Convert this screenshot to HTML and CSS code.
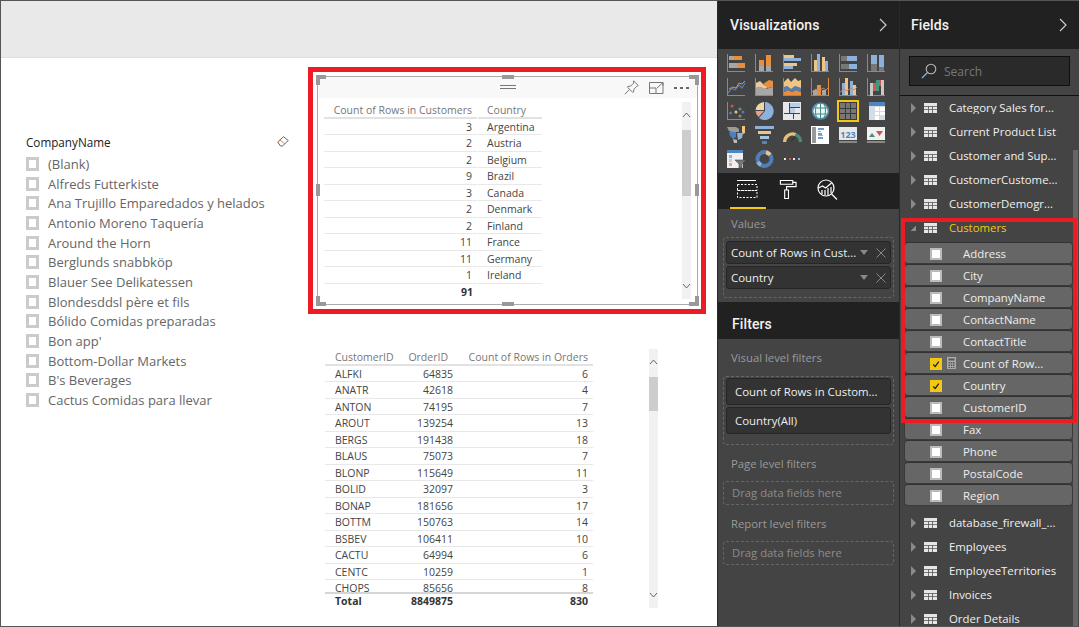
FILE: index.html
```html
<!DOCTYPE html>
<html lang="en">
<head>
<meta charset="utf-8">
<title>Power BI Desktop</title>
<link rel="stylesheet" href="styles.css">
</head>
<body>
<svg class="defs" width="0" height="0">
  <symbol id="tbl" viewBox="0 0 13 10"><path fill="#e6e6e6" d="M0 0h13v10H0z"/><path fill="#555" d="M0 3h13v.8H0zM0 6h13v.8H0zM4 3h.8v7H4zM8.2 3h.8v7h-.8z"/></symbol>
</svg>
<div class="app">
  <main class="canvas">
    <div class="ribbon"></div>
    <div class="page">

      <section class="slicer">
        <div class="slicer-head"><span>CompanyName</span>
          <svg class="eraser" width="12" height="11" viewBox="0 0 12 11"><path fill="#fff" stroke="#666" d="M.7 6 6.500.7l4.800 3.800L5.500 10H3.500z"/><path fill="none" stroke="#d98a5a" d="M3 4l5 4"/></svg>
        </div>
        <ul class="slicer-list">
          <li><i></i>(Blank)</li>
          <li><i></i>Alfreds Futterkiste</li>
          <li><i></i>Ana Trujillo Emparedados y helados</li>
          <li><i></i>Antonio Moreno Taquería</li>
          <li><i></i>Around the Horn</li>
          <li><i></i>Berglunds snabbköp</li>
          <li><i></i>Blauer See Delikatessen</li>
          <li><i></i>Blondesddsl père et fils</li>
          <li><i></i>Bólido Comidas preparadas</li>
          <li><i></i>Bon app'</li>
          <li><i></i>Bottom-Dollar Markets</li>
          <li><i></i>B's Beverages</li>
          <li><i></i>Cactus Comidas para llevar</li>
        </ul>
      </section>

      <div class="highlight-visual"></div>
      <section class="visual-one">
        <div class="visual-bar">
          <span class="drag"></span>
          <div class="visual-tools">
            <svg width="15" height="15" viewBox="0 0 15 15"><path fill="none" stroke="#777" d="M9.500 .8l4.700 4.700-1.300.7-3 3-.3 2.800-.9.300L3.500 7.300l.4-.9 2.700-.3 3-3zM5.500 9.500 .8 14.200"/></svg>
            <svg width="15" height="13" viewBox="0 0 15 13"><path fill="none" stroke="#777" d="M.5 1.500h13.500v11H.5zM.5 7h6.500v5.500M8 7l6-5.500M10.500 1.500h3.500v3"/></svg>
            <span class="dots"><b></b><b></b><b></b></span>
          </div>
        </div>
        <div class="grid-one">
          <div class="hd r gap"><span>Count of Rows in Customers</span></div><div class="hd"><span>Country</span></div>
          <div class="r gap">3</div><div>Argentina</div>
          <div class="r gap">2</div><div>Austria</div>
          <div class="r gap">2</div><div>Belgium</div>
          <div class="r gap">9</div><div>Brazil</div>
          <div class="r gap">3</div><div>Canada</div>
          <div class="r gap">2</div><div>Denmark</div>
          <div class="r gap">2</div><div>Finland</div>
          <div class="r gap">11</div><div>France</div>
          <div class="r gap">11</div><div>Germany</div>
          <div class="r gap">1</div><div>Ireland</div>
          <div class="r tot">91</div><div class="tot"></div>
        </div>
        <div class="scroll scroll-one">
          <svg width="9" height="6" viewBox="0 0 9 6"><path fill="none" stroke="#666" d="M1 5l3.500-4L8 5"/></svg>
          <span class="thumb thumb-one"></span>
          <svg class="down" width="9" height="6" viewBox="0 0 9 6"><path fill="none" stroke="#666" d="M1 1l3.500 4L8 1"/></svg>
        </div>
        <span class="h corner tl"></span><span class="h corner tr"></span><span class="h corner bl"></span><span class="h corner br"></span>
        <span class="h top"></span><span class="h bottom"></span><span class="h left"></span><span class="h right"></span>
      </section>

      <section class="visual-two">
        <div class="grid-two head-two">
          <div class="hd">CustomerID</div><div class="hd r">OrderID</div><div class="hd r">Count of Rows in Orders</div>
        </div>
        <div class="body-two">
          <div class="grid-two">
            <div>ALFKI</div><div class="r">64835</div><div class="r">6</div>
            <div>ANATR</div><div class="r">42618</div><div class="r">4</div>
            <div>ANTON</div><div class="r">74195</div><div class="r">7</div>
            <div>AROUT</div><div class="r">139254</div><div class="r">13</div>
            <div>BERGS</div><div class="r">191438</div><div class="r">18</div>
            <div>BLAUS</div><div class="r">75073</div><div class="r">7</div>
            <div>BLONP</div><div class="r">115649</div><div class="r">11</div>
            <div>BOLID</div><div class="r">32097</div><div class="r">3</div>
            <div>BONAP</div><div class="r">181656</div><div class="r">17</div>
            <div>BOTTM</div><div class="r">150763</div><div class="r">14</div>
            <div>BSBEV</div><div class="r">106411</div><div class="r">10</div>
            <div>CACTU</div><div class="r">64994</div><div class="r">6</div>
            <div>CENTC</div><div class="r">10259</div><div class="r">1</div>
            <div>CHOPS</div><div class="r">85656</div><div class="r">8</div>
          </div>
        </div>
        <div class="grid-two total-two">
          <div>Total</div><div class="r">8849875</div><div class="r">830</div>
        </div>
        <div class="scroll scroll-two">
          <svg width="9" height="6" viewBox="0 0 9 6"><path fill="none" stroke="#666" d="M1 5l3.500-4L8 5"/></svg>
          <span class="thumb thumb-two"></span>
          <svg class="down" width="9" height="6" viewBox="0 0 9 6"><path fill="none" stroke="#666" d="M1 1l3.500 4L8 1"/></svg>
        </div>
      </section>
    </div>
  </main>

  <aside class="panel viz">
    <header class="panel-head"><h2>Visualizations</h2>
      <svg width="8" height="14" viewBox="0 0 8 14"><path fill="none" stroke="#ccc" stroke-width="1.200" d="M1 1l6 6-6 6"/></svg>
    </header>
    <div class="gallery">
      <svg width="19" height="18" viewBox="0 0 19 18"><path stroke="#8a8a8a" fill="none" d="M.5 0v18M0 17.500h18"/><path fill="#a7a7a7" d="M2 2h5v4H2zM2 9h8v5H2z"/><path fill="#e98e3b" d="M7 2h8v4H7zM10 9h8v5h-8z"/></svg>
      <svg width="19" height="18" viewBox="0 0 19 18"><path stroke="#8a8a8a" fill="none" d="M.5 0v18M0 17.500h18"/><path fill="#e98e3b" d="M4 6h5v6H4zM11 1h5v11h-5z"/><path fill="#a7a7a7" d="M4 12h5v5H4zM11 12h5v5h-5z"/></svg>
      <svg width="19" height="18" viewBox="0 0 19 18"><path stroke="#8a8a8a" fill="none" d="M.5 0v18M0 17.500h18"/><path fill="#eec584" d="M1 1h10v3H1zM1 9h13v3H1z"/><path fill="#8eb1dc" d="M1 4h17v3H1zM1 12h9v3H1z"/></svg>
      <svg width="19" height="18" viewBox="0 0 19 18"><path stroke="#8a8a8a" fill="none" d="M.5 0v18M0 17.500h18"/><path fill="#eec584" d="M3 6h3v11H3zM11 3h3v14h-3z"/><path fill="#8eb1dc" d="M6 0h3v17H6zM14 7h3v10h-3z"/></svg>
      <svg width="19" height="18" viewBox="0 0 19 18"><path stroke="#8a8a8a" fill="none" d="M.5 0v18M0 17.500h18"/><path fill="#777" d="M2 2h6v5H2zM2 10h8v5H2z"/><path fill="#8eb1dc" d="M8 2h10v5H8zM10 10h8v5h-8z"/></svg>
      <svg width="19" height="18" viewBox="0 0 19 18"><path stroke="#8a8a8a" fill="none" d="M.5 0v18M0 17.500h18"/><path fill="#8eb1dc" d="M4 1h6v9H4zM12 1h5v12h-5z"/><path fill="#777" d="M4 10h6v7H4zM12 13h5v4h-5z"/></svg>

      <svg width="19" height="18" viewBox="0 0 19 18"><path stroke="#8a8a8a" fill="none" d="M.5 0v18M0 17.500h18"/><path fill="none" stroke="#4f7eb8" stroke-width="1.300" d="M1 15l4-5 3 2 4-5 3 3 3-5"/><path fill="none" stroke="#e98e3b" d="M2 11l4-2 3 1 3-5 3 1 3-3"/></svg>
      <svg width="19" height="18" viewBox="0 0 19 18"><path stroke="#8a8a8a" fill="none" d="M0 17.500h18M.5 0v18"/><path fill="#a7a7a7" d="M1 17v-7l4-1 5 2 8-2v8z"/><path fill="#eac9a0" d="M1 10V5l4-2 4 4 4 2-3 2-5-2z"/><path fill="#e98e3b" d="M8 6l6-4 4 1v6l-5 1z"/></svg>
      <svg width="19" height="18" viewBox="0 0 19 18" overflow="visible"><path stroke="#8a8a8a" fill="none" d="M.5 0v18M0 17.500h18"/><path fill="#e98e3b" d="M1 14l4-2 4 2 4-2 5 2v3H1z"/><path fill="#4f7eb8" d="M1 9l3-1 4 3 4-3 6 2v4l-5-2-4 2-4-2-4 2z"/><path fill="#eec584" d="M1 4l4-4 3 4 4-4 3 3 3-1v8l-6-2-4 3-4-3-3 1z"/></svg>
      <svg width="19" height="18" viewBox="0 0 19 18"><path stroke="#8a8a8a" fill="none" d="M.5 0v18M0 17.500h18"/><path fill="#a7a7a7" d="M2 12h4v5H2zM11 12h4v5h-4z"/><path fill="#e98e3b" d="M6 7h4v10H6z"/><path stroke="#e98e3b" fill="none" d="M17.500 0v18"/><path fill="none" stroke="#d9824a" d="M1 14l4-3 3 2 4-3 3 2 3-3"/></svg>
      <svg width="19" height="18" viewBox="0 0 19 18"><path stroke="#8a8a8a" fill="none" d="M.5 0v18M0 17.500h18"/><path fill="#8eb1dc" d="M3 5h3v12H3zM11 3h3v14h-3z"/><path fill="#eec584" d="M6 0h3v17H6zM14 7h3v10h-3z"/><path fill="none" stroke="#d9824a" d="M1 14l4-3 3 2 4-3 3 2 3-3"/></svg>
      <svg width="19" height="18" viewBox="0 0 19 18"><path stroke="#8a8a8a" fill="none" d="M.5 0v18M0 17.500h18"/><path fill="#c8c8c8" d="M3 5h3v13H3z"/><path fill="#d2574c" d="M6 5h3v8H6z"/><path fill="#3f9a7c" d="M9 2h3v11H9z"/><path fill="#d2574c" d="M12 2h2v6h-2z"/><path fill="#c8c8c8" d="M14 2h3v15h-3z"/></svg>

      <svg width="19" height="18" viewBox="0 0 19 18"><path stroke="#8a8a8a" fill="none" d="M.5 0v18M0 17.500h18"/><circle cx="5" cy="4" r="1.500" fill="#c9594c"/><circle cx="3.500" cy="11" r="1.500" fill="#4f7eb8"/><circle cx="9" cy="10" r="1.500" fill="#eec584"/><circle cx="13" cy="7" r="1.500" fill="#5d9a88"/><circle cx="13" cy="14" r="1.500" fill="#8a8a8a"/><circle cx="16" cy="10" r="1.500" fill="#4f7eb8"/></svg>
      <svg width="19" height="18" viewBox="0 0 19 18"><path fill="#8eb1dc" d="M10 0a9 9 0 1 1-6 16l6-7z"/><path fill="#f1d6a8" d="M9 0v8H0.500A9 9 0 0 1 9 0z"/><path fill="#e5a08f" d="M.500 9H9l-5.500 6A9 9 0 0 1 .500 9z"/></svg>
      <svg width="19" height="18" viewBox="0 0 19 18"><path fill="#e8e8e8" d="M0 0h18v18H0z"/><path fill="#444" d="M6 1h1v10H6zM7 5h10v1H7zM1 11h16v1H1zM10 12h1v5h-1z"/><path fill="#b9cfe8" d="M7 1h10v4H7zM7 6h5v5H7z"/></svg>
      <svg width="19" height="18" viewBox="0 0 19 18"><circle cx="9.500" cy="9" r="8" fill="#f0f4f0" stroke="#4f86b8" stroke-width="1.600"/><path fill="none" stroke="#3f8f88" d="M2 6h15M2 12h15M9.500 1v16M6 1.500c-2 4-2 11 0 15M13 1.500c2 4 2 11 0 15"/></svg>
      <svg class="selected" width="22" height="22" viewBox="0 0 22 22"><rect x="1" y="1" width="20" height="20" fill="#3a3a3a" stroke="#f2c811" stroke-width="2"/><path fill="#777" d="M3 3h5v5H3zM9 3h4v5H9zM14 3h5v5h-5zM3 9h5v4H3zM9 9h4v4H9zM14 9h5v4h-5zM3 14h5v5H3zM9 14h4v5H9zM14 14h5v5h-5z"/></svg>
      <svg width="19" height="18" viewBox="0 0 19 18"><path fill="#d3dde8" d="M2 0h16v18H2z"/><path fill="#4f86c0" d="M2 0h16v4H2z"/><path fill="#fff" d="M8 5h4v4H8zM13 5h5v4h-5zM8 10h4v3H8zM13 10h5v3h-5z"/><path fill="#fff" d="M8 14h4v4H8z"/></svg>

      <svg width="19" height="18" viewBox="0 0 19 18"><path fill="#9a9a9a" d="M0 1h9l3 2v3H5L2 5z"/><path fill="#4f7eb8" d="M2 6h7v5l-3 2-3-3z"/><path fill="#8eb1dc" d="M10 7h6l-1 5-4 2z"/><path fill="#bcbcbc" d="M6 13l4 1v3H7z"/><path fill="#eec584" d="M15 0h3v7l-2 1-1-2z"/></svg>
      <svg width="19" height="18" viewBox="0 0 19 18"><path fill="#8eb1dc" d="M0 0h19v3H0z"/><path fill="#eec584" d="M3 5h13v3H3z"/><path fill="#a7c3e2" d="M5 10h9v3H5z"/><path fill="#4f86c0" d="M7 15h5v3H7z"/></svg>
      <svg width="19" height="18" viewBox="0 0 19 18"><path fill="none" stroke="#e5c07b" stroke-width="3.200" d="M1.600 16a8 8 0 0 1 11-7.500"/><path fill="none" stroke="#4d8a78" stroke-width="3.200" d="M12.600 8.500a8 8 0 0 1 4.800 7.500"/><path fill="none" stroke="#333" stroke-width="1.300" d="M8 15l4-4"/></svg>
      <svg width="19" height="18" viewBox="0 0 19 18"><path fill="#fff" d="M0 0h18v18H0z"/><path fill="#999" d="M1 1h4v16H1z"/><path fill="#6f9bd0" d="M7 2h6v2H7zM7 7h4v2H7zM7 11h5v2H7z"/><path fill="#aaa" d="M7 5h3v1H7zM7 9h5v1H7z"/></svg>
      <svg width="19" height="18" viewBox="0 0 19 18"><path fill="#e8e8e8" d="M0 1h18v13H0z"/><path fill="#888" d="M0 15h18v2H0z"/><text class="card-num" x="9" y="11.500" text-anchor="middle">123</text></svg>
      <svg width="19" height="18" viewBox="0 0 19 18"><path fill="#f1f1f1" d="M0 1h18v13H0z"/><path fill="#888" d="M0 15h18v2H0z"/><path fill="#4d8a78" d="M2 11l3-4 3 4z"/><path fill="#c9594c" d="M9 5h7l-3.500 5z"/></svg>

      <svg width="19" height="18" viewBox="0 0 19 18"><path fill="#eef0f4" d="M0 0h16v18H0z"/><path fill="#4f86c0" d="M0 0h16v3H0z"/><path fill="#8eb1dc" d="M2 5h3v3H2z"/><path fill="#eec584" d="M2 9h3v3H2z"/><path fill="#e5a08f" d="M2 13h3v3H2z"/><path fill="#777" stroke="#444" stroke-width=".6" d="M8 10h11l-4 4v4h-3v-4z"/></svg>
      <svg width="19" height="18" viewBox="0 0 19 18"><circle cx="9.500" cy="9" r="7" fill="none" stroke="#4f7eb8" stroke-width="4"/><path fill="none" stroke="#eec584" stroke-width="4" d="M11 2.200a7 7 0 0 1 4 2.500"/><path fill="none" stroke="#8eb1dc" stroke-width="4" d="M3 12a7 7 0 0 0 3 3"/></svg>
      <svg width="19" height="18" viewBox="0 0 19 18"><path fill="#e8e8e8" d="M1 8h2v2H1zM10 8h2v2h-2z"/><path fill="#d2574c" d="M6 8h2v2H6z"/><path fill="#8eb1dc" d="M15 8h2v2h-2z"/></svg>
    </div>
    <nav class="tabs">
      <span class="tab active"><svg width="22" height="20" viewBox="0 0 22 20"><path fill="none" stroke="#fff" d="M0 .5h19"/><path fill="none" stroke="#fff" stroke-dasharray="2 1.500" d="M.5 4.500h19.500v6H.5zM.5 10.500h19.500v7H.5z"/></svg></span>
      <span class="tab"><svg width="19" height="21" viewBox="0 0 19 21"><path fill="none" stroke="#fff" stroke-width="1.200" d="M1.500 1h13v4h-13zM14.500 3H18v4.500H8V11M6 11h4v9H6z"/></svg></span>
      <span class="tab"><svg width="21" height="21" viewBox="0 0 21 21"><circle cx="9" cy="9" r="8" fill="none" stroke="#fff" stroke-width="1.200"/><path fill="none" stroke="#fff" stroke-width="1.200" d="M14.500 15l5.500 5.500M1.500 9l4-2 3 2 6-5M5 11v4M8 11v5M11 9v7M14 8v6"/></svg></span>
    </nav>
    <div class="section values">
      <h3 class="muted">Values</h3>
      <div class="well">
        <div class="chip"><span class="chip-text">Count of Rows in Cust...</span><i class="caret"></i><svg class="close" width="10" height="10" viewBox="0 0 10 10"><path stroke="#888" d="M.5.500l9 9M9.500.500l-9 9"/></svg></div>
        <div class="chip"><span class="chip-text">Country</span><i class="caret"></i><svg class="close" width="10" height="10" viewBox="0 0 10 10"><path stroke="#888" d="M.5.500l9 9M9.500.500l-9 9"/></svg></div>
      </div>
    </div>
    <header class="filters-head"><h2>Filters</h2></header>
    <div class="section filters">
      <h3 class="muted">Visual level filters</h3>
      <div class="well well-filters">
        <div class="chip tall">Count of Rows in Custom...</div>
        <div class="chip tall">Country(All)</div>
      </div>
      <h3 class="muted sub">Page level filters</h3>
      <div class="drop">Drag data fields here</div>
      <h3 class="muted sub">Report level filters</h3>
      <div class="drop">Drag data fields here</div>
    </div>
  </aside>

  <aside class="panel fields">
    <header class="panel-head"><h2>Fields</h2>
      <svg width="8" height="14" viewBox="0 0 8 14"><path fill="none" stroke="#ccc" stroke-width="1.200" d="M1 1l6 6-6 6"/></svg>
    </header>
    <div class="search-wrap">
      <div class="search">
        <svg width="16" height="16" viewBox="0 0 16 16"><circle cx="10" cy="6" r="4.800" fill="none" stroke="#bbb" stroke-width="1.100"/><path stroke="#8fb4d0" stroke-width="1.200" d="M6.500 9.500 1 15"/></svg>
        <span>Search</span>
      </div>
    </div>
    <div class="list-wrap">
      <span class="list-thumb"></span>
      <div class="list">
        <div class="group"><i class="tri"></i><svg width="13" height="10"><use href="#tbl"/></svg><span>Category Sales for...</span></div>
        <div class="group"><i class="tri"></i><svg width="13" height="10"><use href="#tbl"/></svg><span>Current Product List</span></div>
        <div class="group"><i class="tri"></i><svg width="13" height="10"><use href="#tbl"/></svg><span>Customer and Sup...</span></div>
        <div class="group"><i class="tri"></i><svg width="13" height="10"><use href="#tbl"/></svg><span>CustomerCustome...</span></div>
        <div class="group"><i class="tri"></i><svg width="13" height="10"><use href="#tbl"/></svg><span>CustomerDemogr...</span></div>
        <div class="group open"><i class="tri down"></i><svg width="13" height="10"><use href="#tbl"/></svg><span>Customers</span></div>
        <div class="field"><i class="check"></i><span>Address</span></div>
        <div class="field"><i class="check"></i><span>City</span></div>
        <div class="field"><i class="check"></i><span>CompanyName</span></div>
        <div class="field"><i class="check"></i><span>ContactName</span></div>
        <div class="field"><i class="check"></i><span>ContactTitle</span></div>
        <div class="field"><i class="check on"><svg width="10" height="9" viewBox="0 0 10 9"><path fill="none" stroke="#222" stroke-width="1.600" d="M1.500 4.500 4 7l4.500-6"/></svg></i><svg class="calc" width="9" height="12" viewBox="0 0 9 12"><path fill="#aaa" d="M0 0h9v12H0z"/><path fill="#555" d="M1.500 1.500h6v2h-6zM1.500 5h1.500v1.500H1.500zM3.800 5h1.500v1.500H3.800zM6 5h1.500v1.500H6zM1.500 7.500h1.500V9H1.500zM3.800 7.500h1.500V9H3.800zM6 7.500h1.500V9H6zM1.500 10h1.500v1H1.500zM3.800 10h1.500v1H3.800zM6 10h1.500v1H6z"/></svg><span>Count of Row...</span></div>
        <div class="field"><i class="check on"><svg width="10" height="9" viewBox="0 0 10 9"><path fill="none" stroke="#222" stroke-width="1.600" d="M1.500 4.500 4 7l4.500-6"/></svg></i><span>Country</span></div>
        <div class="field"><i class="check"></i><span>CustomerID</span></div>
        <div class="field"><i class="check"></i><span>Fax</span></div>
        <div class="field"><i class="check"></i><span>Phone</span></div>
        <div class="field"><i class="check"></i><span>PostalCode</span></div>
        <div class="field last"><i class="check"></i><span>Region</span></div>
        <div class="group"><i class="tri"></i><svg width="13" height="10"><use href="#tbl"/></svg><span>database_firewall_...</span></div>
        <div class="group"><i class="tri"></i><svg width="13" height="10"><use href="#tbl"/></svg><span>Employees</span></div>
        <div class="group"><i class="tri"></i><svg width="13" height="10"><use href="#tbl"/></svg><span>EmployeeTerritories</span></div>
        <div class="group"><i class="tri"></i><svg width="13" height="10"><use href="#tbl"/></svg><span>Invoices</span></div>
        <div class="group"><i class="tri"></i><svg width="13" height="10"><use href="#tbl"/></svg><span>Order Details</span></div>
      </div>
      <div class="highlight-fields"></div>
    </div>
  </aside>
</div>
</body>
</html>
```

FILE: styles.css
```css
* { box-sizing: border-box; }
html, body { margin: 0; padding: 0; height: 100%; overflow: hidden; }
body { font-family: "Open Sans", "Noto Sans", sans-serif; background: #fff; }
.defs { position: absolute; }
h2, h3, ul { margin: 0; padding: 0; font-weight: normal; }

.app {
  display: flex;
  width: 1079px;
  height: 627px;
  border-top: 1px solid #555;
  border-bottom: 1px solid #555;
  border-left: 1px solid #555;
  overflow: hidden;
}

/* Canvas */
.canvas { width: 716px; flex: none; display: flex; flex-direction: column; }
.ribbon { height: 57px; flex: none; background: #e9e9e9; border-bottom: 1px solid #ddd; }
.page { flex: 1; position: relative; background: #fff; }

/* Positions on .page: x = screen - 1, y = screen - 58 */
.slicer { position: absolute; left: 25px; top: 76px; width: 265px; }
.slicer-head { display: flex; justify-content: space-between; align-items: center; height: 15px; font-size: 11.7px; color: #222; }
.eraser { margin-right: 2px; }
.slicer-list { list-style: none; margin-top: 5.3px; }
.slicer-list li { height: 19.67px; display: flex; align-items: center; gap: 9px; font-size: 13px; color: #666; white-space: nowrap; }
.slicer-list i { width: 13px; height: 14px; flex: none; border: 3px solid #cbcbcb; background: #fff; }

.highlight-visual { position: absolute; left: 307px; top: 9px; width: 398px; height: 247px; border: 5px solid #ed1c24; }

.visual-one { position: absolute; left: 316px; top: 18px; width: 381px; height: 229px; border: 1px solid #aaa; }
.visual-bar { height: 21px; background: #f8f8f8; position: relative; }
.drag { position: absolute; left: 182px; top: 8px; width: 16px; height: 4px; border-top: 1px solid #777; border-bottom: 1px solid #777; }
.visual-tools { position: absolute; right: 8px; top: 3px; display: flex; align-items: center; gap: 10px; }
.dots { display: flex; gap: 3px; }
.dots b { width: 3px; height: 2px; background: #666; }

.grid-one { position: absolute; left: 6px; top: 25px; display: grid; grid-template-columns: 154px 64px; grid-auto-rows: 16.5px; font-size: 10.5px; color: #444; }
.grid-one > div, .grid-two > div { border-bottom: 1px solid #e8e8e8; line-height: 16px; white-space: nowrap; }
.grid-one > div { padding-left: 9px; }
.grid-one > .r { padding: 0 5px 0 0; text-align: right; }
.grid-one > .gap { margin-right: 1px; }
.grid-one > .hd { border-bottom: 2px solid #e2e2e2; color: #777; height: 17px; }
.grid-one > .tot { border: 0; font-weight: 700; margin: 0; color: #333; }
.r { text-align: right; }

.visual-two { position: absolute; left: 324px; top: 291px; width: 363px; height: 260px; font-size: 10.5px; color: #444; }
.grid-two { display: grid; grid-template-columns: 80px 48px 140px; width: 268px; grid-auto-rows: 16.5px; }
.grid-two > div { padding: 0 0 0 10px; }
.grid-two > .r { padding: 0; }
.grid-two > .r:nth-child(3n) { padding-right: 5px; }
.head-two > .hd { color: #777; border-bottom: 2px solid #e2e2e2; }
.grid-two.head-two > .r { padding-right: 5px; }
.body-two { height: 226px; }
.body-two > .grid-two > div:nth-last-child(-n+3) { border-bottom: 0; }
.total-two { border-top: 2px solid #d6d6d6; position: relative; background: #fff; }
.grid-two.total-two > div { border: 0; font-weight: 700; color: #333; line-height: 14px; }

.card-num { font-size: 9px; font-weight: 700; fill: #4f86c0; font-family: "Open Sans", sans-serif; }

.scroll { position: absolute; background: #f1f1f1; width: 9px; display: flex; flex-direction: column; align-items: center; }
.scroll svg { margin-top: 10px; flex: none; }
.scroll .down { margin-top: auto; margin-bottom: 10px; }
.thumb { display: block; width: 9px; background: #cdcdcd; flex: none; }
.scroll-one { right: 6px; top: 25px; height: 197px; }
.thumb-one { height: 66px; margin-top: 12px; }
.scroll-two { right: 30px; top: 0; height: 259px; }
.thumb-two { height: 34px; margin-top: 12px; }

.h { position: absolute; background: #999; }
.corner { width: 10px; height: 10px; background:
  linear-gradient(#999, #999) 0 0 / 10px 4px no-repeat,
  linear-gradient(#999, #999) 0 0 / 4px 10px no-repeat; }
.tl { left: -2px; top: -2px; }
.tr { right: -2px; top: -2px; transform: scaleX(-1); }
.bl { left: -2px; bottom: -2px; transform: scaleY(-1); }
.br { right: -2px; bottom: -2px; transform: scale(-1, -1); }
.top { left: 184px; top: -2px; width: 12px; height: 4px; }
.bottom { left: 184px; bottom: -2px; width: 12px; height: 4px; }
.left { left: -2px; top: 107px; width: 4px; height: 12px; }
.right { right: -2px; top: 107px; width: 4px; height: 12px; }

/* Panels */
.panel { flex: none; display: flex; flex-direction: column; background: #444; color: #eee; border-left: 1px solid #2a2a2a; }
.viz { width: 182px; }
.fields { width: 180px; }
.panel-head { height: 48px; flex: none; background: #212121; display: flex; justify-content: space-between; align-items: center; }
.panel-head h2, .filters-head h2 { font-family: Roboto, sans-serif; font-weight: 500; font-size: 14px; letter-spacing: .1px; color: #f2f2f2; }
.viz .panel-head { padding: 0 12px 0 12px; }
.fields .panel-head { padding: 0 12px 0 11px; }

.gallery { height: 124px; flex: none; display: grid; grid-template-columns: repeat(6, 28px); grid-auto-rows: 24px; padding: 5px 0 0 9px; align-items: start; }
.selected { margin: -2px 0 0 -2px; }
.tabs { height: 36px; flex: none; background: #212121; display: flex; padding-left: 12px; }
.tab { width: 36px; height: 36px; display: flex; align-items: flex-start; justify-content: center; padding-top: 7px; margin-right: 13px; }
.tab.active { border-bottom: 2px solid #f2c811; }
.tab:nth-child(2) { width: 18px; margin-right: 20px; padding-top: 6px; }
.tab:nth-child(3) { width: 21px; padding-top: 6px; }

.section { padding: 0 5px; }
.muted { color: #9a9a9a; font-size: 11.3px; height: 17px; line-height: 17px; padding-left: 8px; white-space: nowrap; }
.values { height: 93px; flex: none; padding-top: 6px; }
.well { border: 1px dashed #666; border-radius: 3px; padding: 3px 2px; margin-top: 5px; height: 61px; display: flex; flex-direction: column; gap: 2px; }
.chip { height: 23px; flex: none; background: #333; border: 1px solid #262626; border-radius: 3px; display: flex; align-items: center; font-size: 11.4px; color: #eee; padding-left: 4px; white-space: nowrap; }
.chip-text { flex: 1; overflow: hidden; }
.caret { width: 0; height: 0; border: 4px solid transparent; border-top: 5px solid #888; border-bottom: 0; margin-right: 8px; }
.close { margin-right: 4px; }
.filters-head { height: 37px; flex: none; background: #212121; display: flex; align-items: center; padding: 7px 0 0 14px; }
.filters { flex: 1; padding-top: 10px; }
.well-filters { height: 69px; margin-top: 10px; padding: 1px 2px; }
.chip.tall { height: 27px; padding-left: 8px; }
.sub { margin-top: 10px; }
.drop { height: 24px; margin-top: 9px; border: 1px dashed #666; border-radius: 3px; font-size: 11.3px; line-height: 22px; padding-left: 8px; color: #8c8c8c; }

/* Fields */
.search-wrap { height: 47px; flex: none; padding: 7px 9px 0 9px; border-bottom: 1px solid #111; }
.search { height: 30px; background: #2a2a2a; border: 1px solid #0f0f0f; display: flex; align-items: center; gap: 7px; padding-left: 11px; font-size: 12px; color: #777; }
.list-wrap { flex: 1; position: relative; overflow: hidden; padding-top: 7px; }
.list { height: 100%; overflow: hidden; }
.list-thumb { position: absolute; right: 1px; top: 54px; bottom: 0; width: 5px; background: #666; }
.group { height: 24px; display: flex; align-items: center; font-size: 11.4px; color: #f0f0f0; white-space: nowrap; position: relative; }
.group:first-child { margin-top: -7px; }
.group svg { margin-left: 8px; }
.group span { margin-left: 12px; margin-bottom: 2px; }
.group:first-child span { height: 12px; line-height: 12px; overflow: hidden; margin-bottom: 0; }
.group.open { color: #f2c811; height: 26px; padding-bottom: 2px; }
.tri { width: 0; height: 0; margin-left: 11px; border-left: 5px solid #8a8a8a; border-top: 5px solid transparent; border-bottom: 5px solid transparent; }
.tri.down { margin-left: 10px; width: 6px; height: 6px; border: 0; background: linear-gradient(135deg, transparent 50%, #8a8a8a 50%); }
.field { width: 169px; height: 22px; margin-left: 4px; padding-top: 1px; background: #666; border: 1px solid #3a3a3a; border-top-color: #333; border-radius: 4px; display: flex; align-items: center; font-size: 11.4px; color: #eee; white-space: nowrap; position: relative; padding-left: 58px; }
.field.last { margin-bottom: 5px; }
.check { position: absolute; left: 25px; top: 5px; width: 12px; height: 12px; border: 2px solid #bbb; background: #fff; display: flex; align-items: center; justify-content: center; }
.check.on { background: #f2c811; border-color: #f2c811; }
.calc { position: absolute; left: 42px; top: 4px; }
.highlight-fields { position: absolute; left: 1px; top: 122px; width: 176px; height: 205px; border: 4px solid #ed1c24; pointer-events: none; }
```
